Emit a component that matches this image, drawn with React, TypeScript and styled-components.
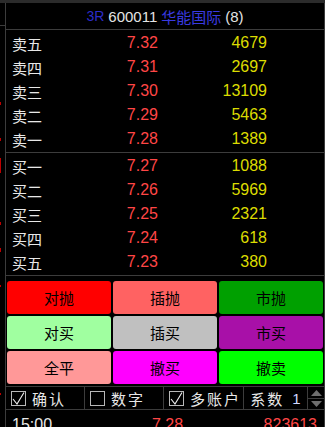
import styled, { createGlobalStyle } from "styled-components"

const GlobalStyle = createGlobalStyle`
  html, body {
    margin: 0;
    padding: 0;
    background: #000;
  }
  body {
    font-family: "Liberation Sans", "Noto Sans CJK SC", sans-serif;
  }
`

const LINE = "#3c3c3c"
const CJK = `"Noto Sans CJK SC", "Liberation Sans", sans-serif`
const NUM = `"Liberation Sans", "Noto Sans CJK SC", sans-serif`

const Frame = styled.div`
  width: 325px;
  height: 427px;
  overflow: hidden;
  display: flex;
  flex-direction: column;
  background: #000;
`

const TopStrip = styled.div`
  height: 3px;
  flex: none;
  background: #2b2b2b;
`

const Body = styled.div`
  flex: 1;
  display: flex;
  min-height: 0;
`

const LeftStrip = styled.div`
  width: 5px;
  flex: none;
  border-right: 1px solid ${LINE};
  display: flex;
  flex-direction: column;
`

const StripTick = styled.div<{ $top: number }>`
  margin-top: ${(p) => p.$top}px;
  height: 1px;
  flex: none;
  background: ${LINE};
`

const RedMark = styled.div<{ $top: number; $h: number }>`
  margin-top: ${(p) => p.$top}px;
  height: ${(p) => p.$h}px;
  flex: none;
  width: 1px;
  background: #c00000;
`

const Main = styled.div`
  width: 318px;
  flex: none;
  border-right: 1px solid ${LINE};
  display: flex;
  flex-direction: column;

  > * {
    flex-shrink: 0;
  }
`

const Header = styled.div`
  height: 26px;
  border-bottom: 1px solid ${LINE};
  display: flex;
  align-items: center;
  justify-content: center;
  gap: 4px;
  font-size: 15px;
  white-space: nowrap;
`

const HeadText = styled.span<{ $c: string; $cjk?: boolean; $size?: number }>`
  color: ${(p) => p.$c};
  font-family: ${(p) => (p.$cjk ? CJK : NUM)};
  font-size: ${(p) => p.$size ?? 15}px;
`

const QuoteBlock = styled.div`
  padding: 1px 0;
  border-bottom: 1px solid ${LINE};
`

const QuoteRow = styled.div`
  height: 24px;
  display: grid;
  grid-template-columns: 90px 56px 109px;
  align-items: center;
  padding-left: 6px;
`

const Label = styled.span`
  font-family: ${CJK};
  font-size: 15px;
  color: #e8e8e8;
`

const Price = styled.span`
  font-family: ${NUM};
  font-size: 16px;
  color: #ff4646;
  text-align: right;
`

const Volume = styled.span`
  font-family: ${NUM};
  font-size: 16px;
  color: #dcdc00;
  text-align: right;
`

const ButtonGrid = styled.div`
  display: grid;
  grid-template-columns: repeat(3, 1fr);
  grid-auto-rows: 33px;
  gap: 2px;
  padding: 5px 1px 0 1px;
`

const ActionButton = styled.button<{ $bg: string }>`
  all: unset;
  box-sizing: border-box;
  display: flex;
  align-items: center;
  justify-content: center;
  background: ${(p) => p.$bg};
  border-radius: 3px;
  font-family: ${CJK};
  font-size: 15px;
  color: #000;
  cursor: pointer;
`

const CheckRow = styled.div`
  margin-top: 2px;
  height: 22px;
  border-top: 1px solid ${LINE};
  border-bottom: 1px solid ${LINE};
  display: grid;
  grid-template-columns: 79px 79px 80px 64px 1fr;
`

const Cell = styled.div<{ $center?: boolean }>`
  display: flex;
  align-items: center;
  justify-content: ${(p) => (p.$center ? "center" : "flex-start")};
  gap: 6px;
  padding-left: ${(p) => (p.$center ? 0 : 5)}px;
  border-right: 1px solid ${LINE};
  font-family: ${CJK};
  font-size: 15px;
  letter-spacing: 2px;
  color: #e8e8e8;
  white-space: nowrap;
`

const Box = styled.span`
  width: 15px;
  height: 15px;
  box-sizing: border-box;
  border: 1px solid #b8b8b8;
  flex: none;
  display: flex;
  padding: 0;
`

const Factor = styled.span`
  font-family: ${NUM};
  color: #d0d8ff;
  letter-spacing: 0;
  margin-left: 2px;
`

const Spinner = styled.div`
  display: flex;
  flex-direction: column;
  align-items: center;
  justify-content: center;
`

const SpinHalf = styled.div`
  height: 10px;
  display: flex;
  align-items: center;
  justify-content: center;
`

const SpinDivider = styled.div`
  height: 1px;
  width: 100%;
  background: ${LINE};
`

const TickRow = styled.div`
  padding: 6px 0 0 6px;
  display: grid;
  grid-template-columns: 140px 60px 105px;
  align-items: center;
  font-family: ${NUM};
  font-size: 16px;
`

const TickCell = styled.span<{ $c: string; $right?: boolean }>`
  color: ${(p) => p.$c};
  text-align: ${(p) => (p.$right ? "right" : "left")};
`

type Level = { label: string; price: string; vol: string }

const sells: Level[] = [
  { label: "卖五", price: "7.32", vol: "4679" },
  { label: "卖四", price: "7.31", vol: "2697" },
  { label: "卖三", price: "7.30", vol: "13109" },
  { label: "卖二", price: "7.29", vol: "5463" },
  { label: "卖一", price: "7.28", vol: "1389" },
]

const buys: Level[] = [
  { label: "买一", price: "7.27", vol: "1088" },
  { label: "买二", price: "7.26", vol: "5969" },
  { label: "买三", price: "7.25", vol: "2321" },
  { label: "买四", price: "7.24", vol: "618" },
  { label: "买五", price: "7.23", vol: "380" },
]

const buttons = [
  { text: "对抛", bg: "#ff0000" },
  { text: "插抛", bg: "#ff6262" },
  { text: "市抛", bg: "#00a000" },
  { text: "对买", bg: "#a0ffa0" },
  { text: "插买", bg: "#c0c0c0" },
  { text: "市买", bg: "#a810a8" },
  { text: "全平", bg: "#ff9898" },
  { text: "撤买", bg: "#ff00ff" },
  { text: "撤卖", bg: "#00ff00" },
]

const CheckBox = ({ checked }: { checked: boolean }) => (
  <Box>
    {checked && (
      <svg width="13" height="13" viewBox="0 0 13 13">
        <path d="M1 7 L5 12 L12 0.5" fill="none" stroke="#f0f0f0" strokeWidth="1.1" />
      </svg>
    )}
  </Box>
)

const Arrow = ({ up }: { up: boolean }) => (
  <svg width="11" height="6" viewBox="0 0 11 6">
    <path d={up ? "M0 6 L5.5 0 L11 6 Z" : "M0 0 L5.5 6 L11 0 Z"} fill="#6e6e6e" />
  </svg>
)

const QuoteList = ({ rows }: { rows: Level[] }) => (
  <QuoteBlock>
    {rows.map((r) => (
      <QuoteRow key={r.label}>
        <Label>{r.label}</Label>
        <Price>{r.price}</Price>
        <Volume>{r.vol}</Volume>
      </QuoteRow>
    ))}
  </QuoteBlock>
)

export default function App() {
  return (
    <>
      <GlobalStyle />
      <Frame>
        <TopStrip />
        <Body>
          <LeftStrip>
            <StripTick $top={22} />
            <RedMark $top={76} $h={3} />
            <RedMark $top={33} $h={3} />
            <RedMark $top={17} $h={15} />
            <RedMark $top={49} $h={3} />
            <RedMark $top={23} $h={4} />
            <RedMark $top={33} $h={2} />
            <RedMark $top={106} $h={2} />
          </LeftStrip>
          <Main>
            <Header>
              <HeadText $c="#2c2cc8" $size={14}>3R</HeadText>
              <HeadText $c="#e4e4e4">600011</HeadText>
              <HeadText $c="#3a3ae0" $cjk>华能国际</HeadText>
              <HeadText $c="#e4e4e4">(8)</HeadText>
            </Header>
            <QuoteList rows={sells} />
            <QuoteList rows={buys} />
            <ButtonGrid>
              {buttons.map((b) => (
                <ActionButton key={b.text} $bg={b.bg}>
                  {b.text}
                </ActionButton>
              ))}
            </ButtonGrid>
            <CheckRow>
              <Cell>
                <CheckBox checked />
                确认
              </Cell>
              <Cell>
                <CheckBox checked={false} />
                数字
              </Cell>
              <Cell>
                <CheckBox checked />
                多账户
              </Cell>
              <Cell $center>
                系数<Factor>1</Factor>
              </Cell>
              <Spinner>
                <SpinHalf>
                  <Arrow up />
                </SpinHalf>
                <SpinDivider />
                <SpinHalf>
                  <Arrow up={false} />
                </SpinHalf>
              </Spinner>
            </CheckRow>
            <TickRow>
              <TickCell $c="#e8e8e8">15:00</TickCell>
              <TickCell $c="#ff4646">7.28</TickCell>
              <TickCell $c="#ff4646" $right>823613</TickCell>
            </TickRow>
          </Main>
        </Body>
      </Frame>
    </>
  )
}
